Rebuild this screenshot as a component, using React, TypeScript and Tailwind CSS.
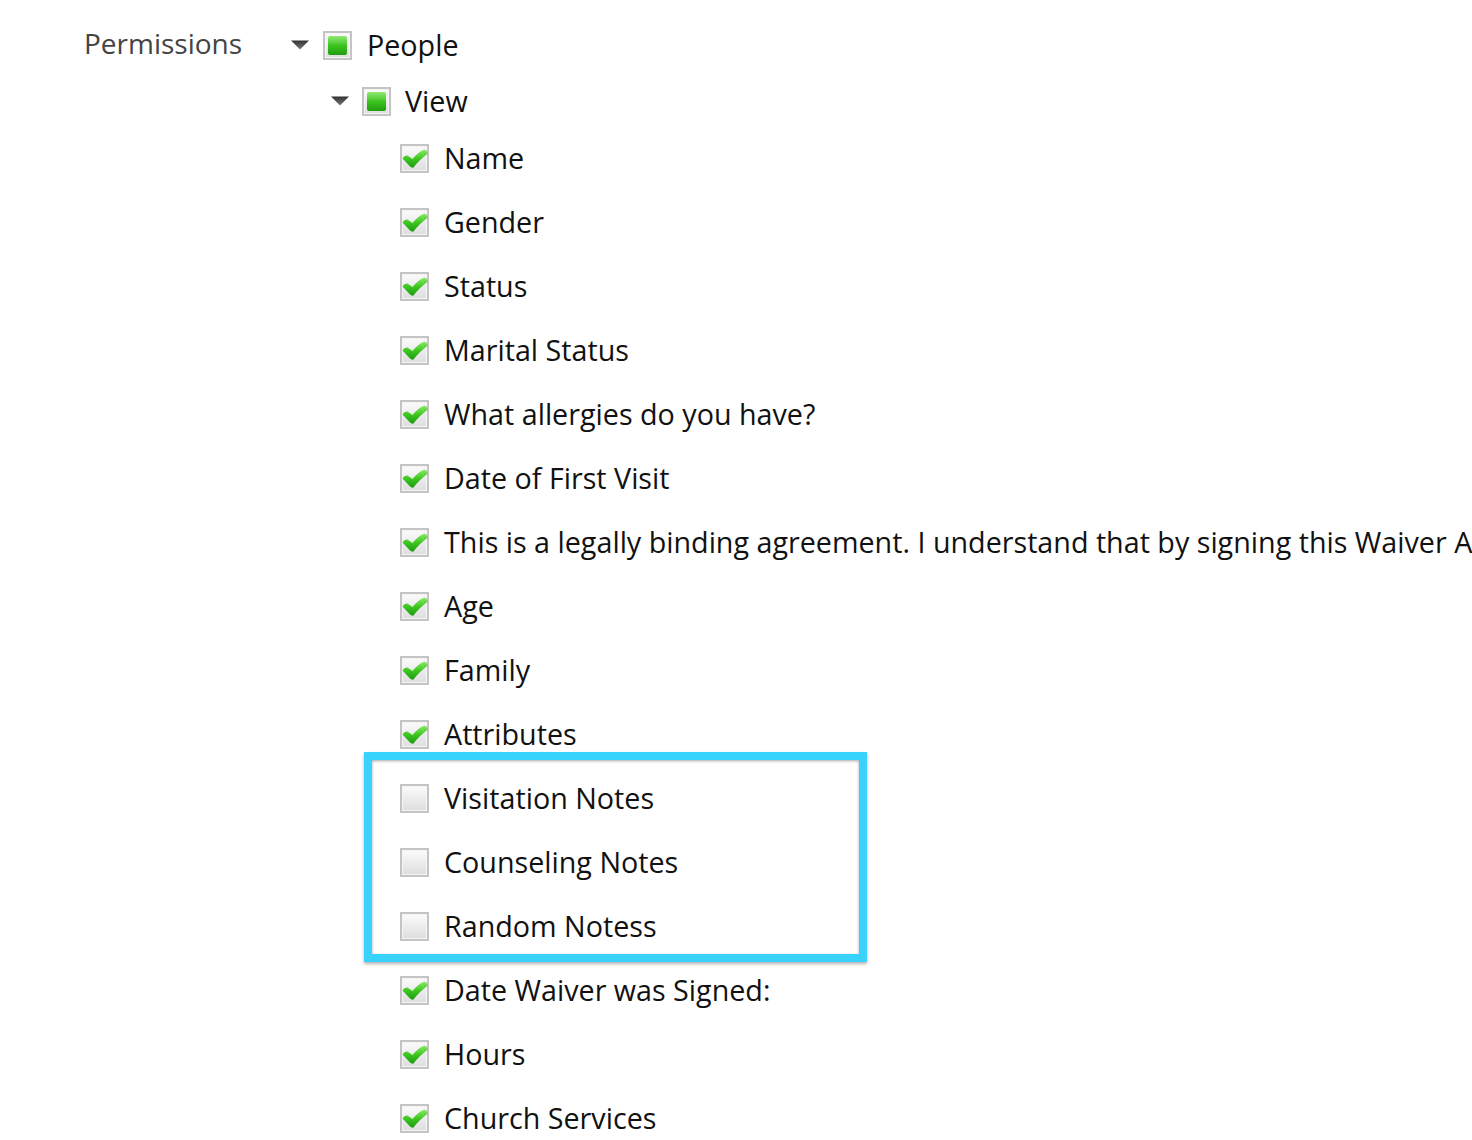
type Item = { label: string; checked: boolean };

const items: Item[] = [
  { label: "Name", checked: true },
  { label: "Gender", checked: true },
  { label: "Status", checked: true },
  { label: "Marital Status", checked: true },
  { label: "What allergies do you have?", checked: true },
  { label: "Date of First Visit", checked: true },
  {
    label:
      "This is a legally binding agreement. I understand that by signing this Waiver Agreement I am agreeing to the terms",
    checked: true,
  },
  { label: "Age", checked: true },
  { label: "Family", checked: true },
  { label: "Attributes", checked: true },
];

const hidden: Item[] = [
  { label: "Visitation Notes", checked: false },
  { label: "Counseling Notes", checked: false },
  { label: "Random Notess", checked: false },
];

const rest: Item[] = [
  { label: "Date Waiver was Signed:", checked: true },
  { label: "Hours", checked: true },
  { label: "Church Services", checked: true },
];

function Box({ state }: { state: "checked" | "partial" | "empty" }) {
  return (
    <div className="relative h-[29px] w-[29px] shrink-0 border-2 border-[#c4c4c4] bg-linear-to-b from-[#fbfbfb] to-[#dedede] shadow-[inset_0_0_0_1px_#f4f4f4]">
      {state === "partial" && (
        <div className="absolute inset-[3px] rounded-[2px] bg-linear-to-b from-[#8fe870] via-[#3cc41e] to-[#1e9c10]" />
      )}
      {state === "checked" && (
        <svg
          className="absolute left-[-1px] top-[1px]"
          width="28"
          height="24"
          viewBox="0 0 28 24"
        >
          <defs>
            <linearGradient id="chk" x1="0" y1="0" x2="0" y2="1">
              <stop offset="0" stopColor="#8ee86a" />
              <stop offset="0.5" stopColor="#3ec61f" />
              <stop offset="1" stopColor="#1d9a12" />
            </linearGradient>
          </defs>
          <path
            d="M1.5 11.5 Q3.5 8 6.5 8.5 L11.5 12 Q17 5 23.5 2.5 Q26.5 3.5 27 6.5 Q18 13 12.5 20.5 Q10.5 21 9 19.5 Z"
            fill="url(#chk)"
          />
        </svg>
      )}
    </div>
  );
}

function Caret() {
  return (
    <svg width="20" height="10" viewBox="0 0 20 10" className="shrink-0">
      <defs>
        <linearGradient id="car" x1="0" y1="0" x2="0" y2="1">
          <stop offset="0" stopColor="#333" />
          <stop offset="1" stopColor="#777" />
        </linearGradient>
      </defs>
      <polygon points="1,0.5 19,0.5 10,9.5" fill="url(#car)" />
    </svg>
  );
}

function Leaf({ item }: { item: Item }) {
  return (
    <div className="flex h-16 items-center pl-[110px]">
      <Box state={item.checked ? "checked" : "empty"} />
      <span className="ml-[15px] whitespace-nowrap">{item.label}</span>
    </div>
  );
}

export default function App() {
  return (
    <div
      className="h-[1140px] w-[1472px] overflow-hidden bg-white text-[28.7px] text-[#111]"
      style={{ fontFamily: '"Open Sans", "Noto Sans", sans-serif' }}
    >
      <div className="flex pl-[84px] pt-[17px]">
        <div className="w-[206px] shrink-0 pt-[6px] text-[28px] leading-[40px] text-[#444]">
          Permissions
        </div>
        <div className="flex-1">
          <div className="flex h-14 items-center">
            <Caret />
            <div className="ml-[13px]">
              <Box state="partial" />
            </div>
            <span className="ml-[15px]">People</span>
          </div>
          <div className="flex h-[53px] items-center pl-[40px] pt-[3px]">
            <Caret />
            <div className="ml-[12px]">
              <Box state="partial" />
            </div>
            <span className="ml-[14px]">View</span>
          </div>
          {items.map((it) => (
            <Leaf key={it.label} item={it} />
          ))}
          <div className="relative">
            {hidden.map((it) => (
              <Leaf key={it.label} item={it} />
            ))}
            <div className="pointer-events-none absolute left-[74px] top-[-14px] h-[210px] w-[503px] border-8 border-[#38d3fb] shadow-[0_2px_3px_rgba(0,0,0,0.3),inset_0_1px_3px_rgba(0,0,0,0.35)]" />
          </div>
          {rest.map((it) => (
            <Leaf key={it.label} item={it} />
          ))}
        </div>
      </div>
    </div>
  );
}
